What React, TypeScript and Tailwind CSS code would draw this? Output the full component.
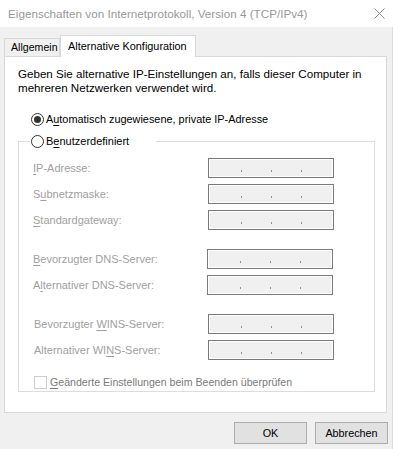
import React from "react";

const U = ({ children }: { children: React.ReactNode }) => (
  <span className="underline underline-offset-2 decoration-1">{children}</span>
);

function IpBox({ left }: { left: number }) {
  return (
    <div
      className={`relative h-[20px] w-[126px] border border-[#7a7a7a] bg-[#f0f0f0] shadow-[inset_0_0_0_1px_#ffffff] ${
        left === 207 ? "ml-[-1px]" : ""
      }`}
    >
      <span className="absolute left-[32px] top-[11px] h-[2px] w-[1px] bg-[#8c8ca8]" />
      <span className="absolute left-[62px] top-[11px] h-[2px] w-[1px] bg-[#8c8ca8]" />
      <span className="absolute left-[92px] top-[11px] h-[2px] w-[1px] bg-[#8c8ca8]" />
    </div>
  );
}

function Row({
  label,
  mt,
  pl = 14,
  left = 208,
}: {
  label: React.ReactNode;
  mt: string;
  pl?: number;
  left?: number;
}) {
  return (
    <div className={`flex items-center ${mt}`}>
      <div
        className={`${pl === 15 ? "pl-[15px] w-[189px]" : "pl-[14px] w-[189px]"} whitespace-nowrap text-[11px] leading-[13px] text-[#a0a0a0] font-['Liberation_Sans',sans-serif]`}
      >
        {label}
      </div>
      <IpBox left={left} />
    </div>
  );
}

function Radio({ checked }: { checked?: boolean }) {
  return (
    <div className="flex h-[13px] w-[13px] shrink-0 items-center justify-center rounded-full border border-[#333333] bg-white">
      {checked && <div className="h-[7px] w-[7px] rounded-full bg-[#333333]" />}
    </div>
  );
}

export default function App() {
  return (
    <div className="relative h-[449px] w-[393px] overflow-hidden bg-[#f0f0f0] font-['Liberation_Sans',sans-serif] text-[12px] text-black">
      {/* title bar */}
      <div className="flex h-[27px] items-center justify-between bg-white pl-[8px] pr-[8px]">
        <span className="whitespace-nowrap text-[11.7px] text-[#999999]">
          Eigenschaften von Internetprotokoll, Version 4 (TCP/IPv4)
        </span>
        <svg width="11" height="11" viewBox="0 0 11 11">
          <path d="M0.5 0.5 L10.5 10.5 M10.5 0.5 L0.5 10.5" stroke="#8a8a8a" strokeWidth="1" />
        </svg>
      </div>
      {/* tabs */}
      <div className="flex h-[29px] items-end pl-[4px]">
        <div className="flex h-[18px] w-[56px] items-center whitespace-nowrap border-l border-r border-t border-[#d9d9d9] bg-[#f0f0f0] pl-[6px] text-[10.6px]">
          Allgemein
        </div>
        <div className="relative z-10 mb-[-1px] flex h-[22px] w-[136px] items-center whitespace-nowrap border-l border-r border-t border-[#d9d9d9] bg-white pl-[7px] text-[10.9px]">
          Alternative Konfiguration
        </div>
      </div>
      {/* panel */}
      <div className="ml-[4px] h-[357px] w-[383px] border border-[#d9d9d9] bg-white">
        <div className="whitespace-nowrap pl-[13px] pt-[10px] text-[11.6px] leading-[14px]">
          <p>Geben Sie alternative IP-Einstellungen an, falls dieser Computer in</p>
          <p>mehreren Netzwerken verwendet wird.</p>
        </div>
        <div className="ml-[26px] mt-[18px] flex h-[13px] items-center gap-[2px]">
          <Radio checked />
          <span className="whitespace-nowrap text-[10.9px] leading-[13px]">
            A<U>u</U>tomatisch zugewiesene, private IP-Adresse
          </span>
        </div>
        {/* group box */}
        <div className="relative ml-[13px] mt-[15px] h-[251px] w-[357px] border border-[#dcdcdc]">
          <div className="absolute left-[11px] top-[-7px] flex h-[13px] w-[126px] items-center gap-[2px] bg-white pl-[1px]">
            <Radio />
            <span className="whitespace-nowrap text-[11px] leading-[13px]">
              B<U>e</U>nutzerdefiniert
            </span>
          </div>
          <div className="pt-[16px]">
            <Row mt="" label={<><U>I</U>P-Adresse:</>} />
            <Row mt="mt-[6px]" label={<>S<U>u</U>bnetzmaske:</>} />
            <Row mt="mt-[6px]" label={<><U>S</U>tandardgateway:</>} />
            <Row mt="mt-[19px]" left={207} label={<><U>B</U>evorzugter DNS-Server:</>} />
            <Row mt="mt-[6px]" left={207} label={<>A<U>l</U>ternativer DNS-Server:</>} />
            <Row mt="mt-[19px]" pl={15} label={<>Bevorzugter <U>W</U>INS-Server:</>} />
            <Row mt="mt-[6px]" pl={15} label={<>Alternativer WI<U>N</U>S-Server:</>} />
            <div className="ml-[15px] mt-[16px] flex h-[13px] items-center gap-[3px]">
              <div className="h-[13px] w-[13px] border border-[#cccccc] bg-white" />
              <span className="whitespace-nowrap text-[10.6px] leading-[13px] text-[#7a7a7a]">
                <U>G</U>eänderte Einstellungen beim Beenden überprüfen
              </span>
            </div>
          </div>
        </div>
      </div>
      {/* buttons */}
      <div className="mt-[9px] flex justify-end gap-[8px] pr-[5px]">
        <button className="h-[22px] w-[73px] border border-[#adadad] bg-[#e1e1e1] text-[10.8px]">
          OK
        </button>
        <button className="h-[22px] w-[73px] border border-[#adadad] bg-[#e1e1e1] text-[10.8px]">
          Abbrechen
        </button>
      </div>
      <div className="absolute right-0 top-[27px] h-[422px] w-[1px] bg-[#dadada]" />
    </div>
  );
}
